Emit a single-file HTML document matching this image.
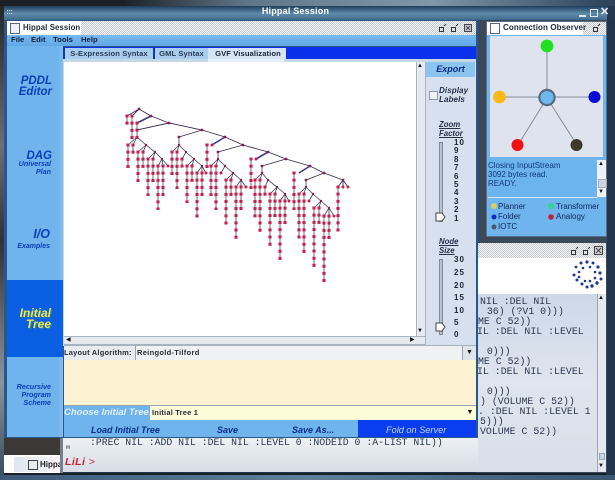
<!DOCTYPE html>
<html><head><meta charset="utf-8"><style>
html,body{margin:0;padding:0;background:#1a2c40}
#r{position:relative;width:615px;height:480px;overflow:hidden;font-family:"Liberation Sans",sans-serif;background:#22364c}
#r div{position:absolute;white-space:nowrap}
.n{font-weight:bold;font-style:italic;color:#0b3fb8;text-align:right}
.m{font-family:"Liberation Mono",monospace;font-size:9.9px;color:#2a3850;left:480px;line-height:11px}
.t{font-size:7.5px;font-weight:bold;color:#2a2c38;letter-spacing:.2px;line-height:10px}
.b{font-weight:bold;font-style:italic;font-size:9px;color:#0c2f88;line-height:12px}
.tab{top:48px;height:11px;background:#a9cdef;font-size:7.6px;font-weight:bold;color:#2b3a52;line-height:12px;text-align:center;border-left:2px solid #1438a8;letter-spacing:.1px}
.sl{font-size:8px;font-weight:bold;color:#1c2430;line-height:9px;left:454px;letter-spacing:1px}
.lg{font-size:8px;color:#0e2a60;line-height:10px}
.mn{top:34px;font-size:7.7px;font-weight:bold;color:#102040;line-height:12px}
.chk{background:repeating-conic-gradient(#c8ccd2 0 25%,#f4f5f7 0 50%) 0 0/2px 2px}
</style></head><body><div id="r">

<div style="left:0;top:0;width:615px;height:6px;background:linear-gradient(90deg,#1c2026 0,#1c2026 20%,#5f7688 40%,#7f98a8 70%,#2c4058 100%)"></div>
<div style="left:0;top:6px;width:5px;height:470px;background:linear-gradient(180deg,#22262c,#6a7078 30%,#2e3238 50%,#8a95a0 80%,#3a4c60)"></div>
<div style="left:4px;top:6px;width:603px;height:14px;background:linear-gradient(180deg,#1f3f5c,#5f8bab 55%,#3f6a8c)"></div>
<div style="left:0;top:5px;width:591px;height:13px;text-align:center;color:#fff;font-size:9px;font-weight:bold;line-height:13px;letter-spacing:.2px">Hippal Session</div>
<div style="left:7px;top:10px;width:5px;height:4px;border-top:1px dotted #dde;border-bottom:1px dotted #dde;box-sizing:border-box"></div>
<div style="left:579px;top:15px;width:7px;height:2px;background:#dfe8f0"></div>
<div style="left:590px;top:9px;width:6px;height:6px;border:1px solid #dfe8f0"></div>
<div style="left:600px;top:6px;color:#e8eef4;font-size:11px;font-weight:bold;line-height:13px">✕</div>

<div style="left:476px;top:20px;width:139px;height:460px;background:#39495a"></div>
<div style="left:607px;top:20px;width:8px;height:460px;background:#23354a"></div>

<!-- Lower-right window -->
<div class="chk" style="left:478px;top:243px;width:128px;height:15px"></div>
<div style="left:478px;top:258px;width:128px;height:36px;background:#fff"></div>
<div style="left:478px;top:294px;width:128px;height:178px;background:linear-gradient(180deg,#cdd8e8,#dfe5ee 50%,#d8dfe8)"></div>
<div style="left:597px;top:294px;width:9px;height:178px;background:#e4e9f0;border-left:1px solid #9aa6b4;box-sizing:border-box"></div>
<div style="left:598px;top:295px;font-size:6px;line-height:7px;color:#111">▲</div>
<div style="left:598px;top:463px;font-size:6px;line-height:7px;color:#111">▼</div>
<div style="left:599px;top:453px;width:6px;height:7px;background:#c4d2e6;border:1px solid #9aa6b4;box-sizing:border-box"></div>
<svg style="position:absolute;left:570px;top:258px" width="36" height="36" fill="#1e3a88">
<circle cx="17" cy="4" r="1.6"/><circle cx="23" cy="5" r="1.5"/><circle cx="11" cy="5" r="1.5"/><circle cx="28" cy="9" r="1.6"/><circle cx="6" cy="9" r="1.4"/><circle cx="30" cy="15" r="1.6"/><circle cx="4" cy="17" r="1.5"/><circle cx="31" cy="21" r="1.5"/><circle cx="7" cy="22" r="1.5"/><circle cx="27" cy="25" r="1.7"/><circle cx="12" cy="26" r="1.5"/><circle cx="22" cy="28" r="1.7"/><circle cx="17" cy="29" r="1.5"/><circle cx="13" cy="10" r="1.3"/><circle cx="20" cy="9" r="1.3"/><circle cx="25" cy="14" r="1.3"/><circle cx="9" cy="14" r="1.3"/><circle cx="9" cy="19" r="1.3"/><circle cx="25" cy="20" r="1.3"/><circle cx="15" cy="23" r="1.3"/><circle cx="20" cy="23" r="1.3"/>
</svg>
<svg style="position:absolute;left:568px;top:245px" width="38" height="11" fill="none" stroke="#333"><path d="M3.500 5.500h4v4h-4zM8 4l2-2M15.500 5.500h4v4h-4zM20 4l2-2"/><rect x="26.500" y="1.500" width="8" height="8" fill="#ccd" stroke="#444"/><path d="M28 3l5 5M33 3l-5 5" stroke="#444"/></svg>
<div class="m" style="top:296px">NIL :DEL NIL</div>
<div class="m" style="top:306px;left:475px">&nbsp;&nbsp;36) (?V1 0)))</div>
<div class="m" style="top:316px;left:478px">ME C 52))</div>
<div class="m" style="top:326px;left:477px">IL :DEL NIL :LEVEL</div>
<div class="m" style="top:346px;left:475px">&nbsp;&nbsp;0)))</div>
<div class="m" style="top:356px;left:478px">ME C 52))</div>
<div class="m" style="top:366px;left:477px">IL :DEL NIL :LEVEL</div>
<div class="m" style="top:386px;left:475px">&nbsp;&nbsp;0)))</div>
<div class="m" style="top:396px">) (VOLUME C 52))</div>
<div class="m" style="top:406px;left:478px">. :DEL NIL :LEVEL 1</div>
<div class="m" style="top:416px">5)))</div>
<div class="m" style="top:426px">VOLUME C 52))</div>

<!-- Bottom left under main frame -->
<div style="left:4px;top:437px;width:58px;height:18px;background:#3c3835"></div>
<div style="left:4px;top:455px;width:58px;height:19px;background:#fff"></div>
<div style="left:14px;top:457px;width:46px;height:15px;background:linear-gradient(90deg,#dfe6f0,#f4f6fa)"></div>
<div style="left:28px;top:460px;width:8px;height:8px;border:1px solid #444"></div>
<div style="left:40px;top:459px;font-size:8px;font-weight:bold;color:#222;line-height:11px">Hippa</div>
<div style="left:60px;top:437px;width:3px;height:36px;background:#777f88"></div>
<div style="left:63px;top:437px;width:415px;height:35px;background:linear-gradient(180deg,#eef1f5,#d8dde6)"></div>
<div style="left:4px;top:473px;width:603px;height:2px;background:#182028"></div>
<div style="left:0;top:475px;width:615px;height:5px;background:linear-gradient(90deg,#3c5a78,#5f7f9a 50%,#3a5670)"></div>
<div style="left:90px;top:437px;font-family:'Liberation Mono',monospace;font-size:9.8px;color:#2a3850;line-height:12px">:PREC NIL :ADD NIL :DEL NIL :LEVEL 0 :NODEID 0 :A-LIST NIL))</div>
<div style="left:65px;top:446px;font-family:'Liberation Mono',monospace;font-size:10px;color:#333;line-height:12px">"</div>
<div style="left:65px;top:456px;font-size:10.5px;font-style:italic;font-weight:bold;color:#d02030;line-height:13px;letter-spacing:.4px">LiLi <span style="font-weight:normal">&gt;</span></div>

<!-- Main frame -->
<div style="left:4px;top:20px;width:474px;height:418px;background:#2a5688"></div>
<div class="chk" style="left:7px;top:21px;width:469px;height:14px"></div>
<div style="left:7px;top:21px;width:74px;height:14px;background:#fff"></div>
<div style="left:10px;top:23px;width:8px;height:9px;border:1px solid #5a6a7a;background:#eef2f6"></div>
<div style="left:23px;top:22px;font-size:7.8px;font-weight:bold;color:#202a38;line-height:12px;letter-spacing:.1px">Hippal Session</div>
<svg style="position:absolute;left:436px;top:23px" width="38" height="11" fill="none" stroke="#333"><path d="M3.500 4.500h4v4h-4zM8 3l2-2M15.500 4.500h4v4h-4zM20 3l2-2"/><rect x="28.500" y="1.500" width="7" height="7" fill="#ccd" stroke="#444"/><path d="M30 3l4 4M34 3l-4 4" stroke="#444"/></svg>
<div style="left:7px;top:35px;width:469px;height:11px;background:linear-gradient(180deg,#78baf0,#62a8e6)"></div>
<div class="mn" style="left:11px">File</div>
<div class="mn" style="left:31px">Edit</div>
<div class="mn" style="left:53px">Tools</div>
<div class="mn" style="left:81px">Help</div>

<!-- sidebar -->
<div style="left:7px;top:46px;width:56px;height:391px;background:linear-gradient(90deg,#6fb4ec,#6fb4ec 90%,#86c0ee)"></div>
<div style="left:7px;top:280px;width:56px;height:77px;background:#0a5fe2"></div>
<div class="n" style="left:7px;width:45px;top:76px;font-size:11.5px;line-height:11px">PDDL<br>Editor</div>
<div class="n" style="left:7px;width:45px;top:150px;font-size:11.5px;line-height:13px">DAG</div>
<div class="n" style="left:7px;width:44px;top:160px;font-size:7.2px;line-height:8px">Universal<br>Plan</div>
<div class="n" style="left:7px;width:43px;top:228px;font-size:12.5px;line-height:13px">I/O</div>
<div class="n" style="left:7px;width:43px;top:242px;font-size:7px;line-height:9px">Examples</div>
<div class="n" style="left:7px;width:44px;top:308px;font-size:12px;line-height:11px;color:#e8ea50;text-shadow:1px 1px 1px #3a7a9a">Initial<br>Tree</div>
<div class="n" style="left:7px;width:44px;top:383px;font-size:7.2px;line-height:8px">Recursive<br>Program<br>Scheme</div>

<!-- tabs -->
<div style="left:63px;top:47px;width:413px;height:12px;background:#0b30ec"></div>
<div class="tab" style="left:63px;width:88px">S-Expression Syntax</div>
<div class="tab" style="left:153px;width:53px">GML Syntax</div>
<div class="tab" style="left:208px;width:76px;background:#d4e4f6;height:13px;color:#1c2434;border-left-color:#d4e4f6">GVF Visualization</div>
<div style="left:63px;top:59px;width:413px;height:3px;background:#c4d8e6"></div>
<div style="left:208px;top:59px;width:76px;height:3px;background:#e6f0fa"></div>
<div style="left:63px;top:59px;width:1px;height:287px;background:#c4d8e6"></div>

<!-- canvas -->
<div style="left:64px;top:62px;width:352px;height:274px;background:#fff"></div>
<svg style="position:absolute;left:0;top:0" width="615" height="480" fill="none">
<path stroke="#3a2a58" stroke-width=".9" d="M139 109L151 116L169 123L202 130L225 137L243 145L268 152L286 159L310 166L324 173L343 180M139 109L127 116M139 109L132 116M169 123L137 130M202 130L179 137M243 145L218 152M286 159L262 166M324 173L306 180M343 180L338 187M343 180L348 187M343 180V187"/>
<path stroke="#3a3a8c" stroke-width="1.6" d="M151 116L137 123M225 137L212 145M268 152L256 159M310 166L299 173"/>
<path stroke="#43405a" stroke-width=".8" d="M137 137L128 145M137 137L133 145M137 137L146 145L155 152L162 159L168 166M146 145L138 152M146 145L143 152M155 152L148 159M155 152L153 159M162 159L158 166M162 159L163 166M179 137V145L186 152L194 159L202 166L206 173M179 145L172 152M179 145L177 152M186 152L182 159M194 159L187 166M194 159L192 166M202 166L197 173M202 166V173M218 152V159L225 166L233 173L241 180L246 187M218 159L211 166M218 159L216 166M225 166L221 173M233 173L226 180M233 173L231 180M241 180L236 187M241 180V187M262 166V173L268 180L277 187L285 194L289 201M262 173L255 180M262 173L260 180M268 180L265 187M277 187L270 194M277 187L275 194M285 194L280 201M285 194V201M306 180V187L313 194L321 201L329 208L334 216M306 187L299 194M306 187L304 194M313 194L309 201M321 201L314 208M321 201L319 208M329 208L324 216M329 208V216"/>
<path stroke="#7d6a78" stroke-width="1" d="M127 115V124M132 115V138M137 122V138M128 144V167M133 144V153M138 151V181M143 151V167M148 158V195M153 158V181M158 165V209M163 165V195M172 151V174M177 151V188M182 158V167M187 165V202M192 165V181M197 172V217M202 172V195M207 144V167M211 165V195M216 165V209M221 172V174M226 179V224M231 179V195M236 186V238M241 186V209M251 158V188M255 179V217M260 179V231M265 186V195M270 193V245M275 193V217M280 200V260M285 200V224M294 172V209M299 193V238M304 193V253M309 200V202M314 207V267M319 207V224M324 215V281M329 215V238M338 186V231"/>
<path stroke="#c4204e" stroke-width="3.1" stroke-dasharray="3 4.17" d="M127 114.500V125M132 114.500V139M137 121.500V139M128 143.500V168M133 143.500V154M138 150.500V182M143 150.500V168M148 157.500V196M153 157.500V182M158 164.500V210M163 164.500V196M172 150.500V175M177 150.500V189M182 157.500V168M187 164.500V203M192 164.500V182M197 171.500V218M202 171.500V196M207 143.500V168M211 164.500V196M216 164.500V210M226 178.500V225M231 178.500V196M236 185.500V239M241 185.500V210M251 157.500V189M255 178.500V218M260 178.500V232M265 185.500V196M270 192.500V246M275 192.500V218M280 199.500V261M285 199.500V225M294 171.500V210M299 192.500V239M304 192.500V254M314 206.500V268M319 206.500V225M324 214.500V282M329 214.500V239M338 185.500V232"/>
<g fill="#c4204e">
<circle cx="168" cy="166" r="1.5"/><circle cx="206" cy="173" r="1.5"/><circle cx="221" cy="173" r="1.5"/><circle cx="246" cy="187" r="1.5"/><circle cx="289" cy="201" r="1.5"/><circle cx="309" cy="201" r="1.5"/><circle cx="334" cy="216" r="1.5"/><circle cx="343" cy="187" r="1.5"/><circle cx="348" cy="187" r="1.5"/><circle cx="256" cy="159" r="1.5"/><circle cx="212" cy="145" r="1.5"/>
</g>
<g fill="#8c1e48">
<circle cx="139" cy="109" r="1.4"/><circle cx="151" cy="116" r="1.4"/><circle cx="169" cy="123" r="1.4"/><circle cx="202" cy="130" r="1.4"/><circle cx="225" cy="137" r="1.4"/><circle cx="243" cy="145" r="1.4"/><circle cx="268" cy="152" r="1.4"/><circle cx="286" cy="159" r="1.4"/><circle cx="310" cy="166" r="1.4"/><circle cx="324" cy="173" r="1.4"/><circle cx="343" cy="180" r="1.4"/><circle cx="179" cy="137" r="1.4"/><circle cx="218" cy="152" r="1.4"/><circle cx="262" cy="166" r="1.4"/><circle cx="306" cy="180" r="1.4"/>
<circle cx="146" cy="145" r="1.2"/><circle cx="155" cy="152" r="1.2"/><circle cx="162" cy="159" r="1.2"/><circle cx="179" cy="145" r="1.2"/><circle cx="186" cy="152" r="1.2"/><circle cx="194" cy="159" r="1.2"/><circle cx="202" cy="166" r="1.2"/><circle cx="218" cy="159" r="1.2"/><circle cx="225" cy="166" r="1.2"/><circle cx="233" cy="173" r="1.2"/><circle cx="241" cy="180" r="1.2"/><circle cx="262" cy="173" r="1.2"/><circle cx="268" cy="180" r="1.2"/><circle cx="277" cy="187" r="1.2"/><circle cx="285" cy="194" r="1.2"/><circle cx="306" cy="187" r="1.2"/><circle cx="313" cy="194" r="1.2"/><circle cx="321" cy="201" r="1.2"/><circle cx="329" cy="208" r="1.2"/>
</g>
</svg>

<!-- scrollbars -->
<div style="left:416px;top:62px;width:9px;height:283px;background:#e6eaf0;border-left:1px solid #aab4c0;box-sizing:border-box"></div>
<div style="left:417px;top:62px;font-size:6px;line-height:8px;color:#111">▲</div>
<div style="left:417px;top:327px;font-size:6px;line-height:8px;color:#111">▼</div>
<div style="left:64px;top:336px;width:361px;height:9px;background:#e6eaf0;border-top:1px solid #aab4c0;border-bottom:1px solid #aab4c0;box-sizing:border-box"></div>
<div style="left:66px;top:336px;font-size:6px;line-height:9px;color:#111">◀</div>
<div style="left:410px;top:336px;font-size:6px;line-height:9px;color:#111">▶</div>

<!-- right controls -->
<div style="left:425px;top:62px;width:51px;height:283px;background:#d6e0ee;border-left:1px solid #a8b4c4;box-sizing:border-box"></div>
<div style="left:426px;top:62px;width:49px;height:15px;background:#8cc4f0;text-align:center;font-size:9px;font-weight:bold;font-style:italic;color:#0c2a80;line-height:15px">Export</div>
<div style="left:429px;top:91px;width:7px;height:7px;background:#eef2f6;border:1px solid #8e9cac"></div>
<div style="left:439px;top:86px;font-size:8px;font-weight:bold;font-style:italic;color:#25304a;line-height:9px;letter-spacing:.1px">Display<br>Labels</div>
<div style="left:439px;top:120px;font-size:7.800px;font-weight:bold;font-style:italic;color:#25304a;line-height:9px;text-decoration:underline">Zoom<br>Factor</div>
<div style="left:439px;top:142px;width:2px;height:78px;background:#b8c2ce;border:1px solid #808a98"></div>
<svg style="position:absolute;left:435px;top:212px" width="12" height="11"><path d="M1 1H7L10 5L7 9H1Z" fill="#fff" stroke="#444"/></svg>
<div class="sl" style="top:138px">10</div><div class="sl" style="top:146px">9</div><div class="sl" style="top:155px">8</div><div class="sl" style="top:163px">7</div><div class="sl" style="top:172px">6</div><div class="sl" style="top:180px">5</div><div class="sl" style="top:188px">4</div><div class="sl" style="top:197px">3</div><div class="sl" style="top:205px">2</div><div class="sl" style="top:214px">1</div>
<div style="left:439px;top:237px;font-size:7.800px;font-weight:bold;font-style:italic;color:#25304a;line-height:9px;text-decoration:underline">Node<br>Size</div>
<div style="left:439px;top:259px;width:2px;height:74px;background:#b8c2ce;border:1px solid #808a98"></div>
<svg style="position:absolute;left:435px;top:322px" width="12" height="11"><path d="M1 1H7L10 5L7 9H1Z" fill="#fff" stroke="#444"/></svg>
<div class="sl" style="top:255px">30</div><div class="sl" style="top:268px">25</div><div class="sl" style="top:281px">20</div><div class="sl" style="top:293px">15</div><div class="sl" style="top:306px">10</div><div class="sl" style="top:318px">5</div><div class="sl" style="top:330px">0</div>

<!-- layout row -->
<div style="left:64px;top:345px;width:412px;height:15px;background:#e8ebef;border-top:1px solid #a8b0b8;box-sizing:border-box"></div>
<div class="t" style="left:64px;top:348px">Layout Algorithm:</div>
<div style="left:135px;top:346px;width:341px;height:14px;background:#f0f1f2;border-left:1px solid #9aa2ac;box-sizing:border-box"></div>
<div class="t" style="left:137px;top:348px;letter-spacing:.3px">Reingold-Tilford</div>
<div style="left:462px;top:346px;width:14px;height:14px;background:#dfe4ea;border-left:1px solid #9aa2ac;box-sizing:border-box;font-size:7px;text-align:center;line-height:14px;color:#111">▼</div>
<div style="left:64px;top:360px;width:412px;height:45px;background:#fdf2d2"></div>
<div style="left:64px;top:405px;width:412px;height:1px;background:#9aa6b0"></div>
<div style="left:64px;top:406px;width:86px;height:14px;background:#6fb4ec"></div>
<div style="left:64px;top:407px;font-size:9.500px;font-weight:bold;font-style:italic;color:#e0f0ff;line-height:12px">Choose Initial Tree:</div>
<div style="left:150px;top:406px;width:326px;height:14px;background:#fdfbd8"></div>
<div class="t" style="left:152px;top:408px">Initial Tree 1</div>
<div style="left:464px;top:406px;font-size:7px;width:12px;text-align:center;line-height:14px;color:#111">▼</div>
<div style="left:64px;top:420px;width:294px;height:17px;background:#6fb4ec"></div>
<div style="left:358px;top:420px;width:118px;height:17px;background:#0a3cf0"></div>
<div class="b" style="left:91px;top:424px">Load Initial Tree</div>
<div class="b" style="left:217px;top:424px">Save</div>
<div class="b" style="left:292px;top:424px">Save As...</div>
<div class="b" style="left:386px;top:424px;color:#c0d6f8;font-weight:normal;font-size:9.200px">Fold on Server</div>

<!-- Connection Observer -->
<div style="left:486px;top:21px;width:121px;height:216px;background:#6fb4ec;border:1px solid #5a7088;box-sizing:border-box"></div>
<div class="chk" style="left:487px;top:22px;width:119px;height:13px"></div>
<div style="left:487px;top:22px;width:96px;height:13px;background:#fff"></div>
<div style="left:490px;top:23px;width:8px;height:9px;border:1px solid #5a6a7a"></div>
<div style="left:503px;top:22px;font-size:8px;font-weight:bold;color:#202a38;line-height:12px;letter-spacing:.1px">Connection Observer</div>
<svg style="position:absolute;left:592px;top:23px" width="12" height="10" fill="none" stroke="#333"><path d="M1.500 4.500h4v4h-4zM6 3l2-2"/></svg>
<div style="left:490px;top:36px;width:113px;height:121px;background:#dfe3ee"></div>
<svg style="position:absolute;left:490px;top:36px" width="113" height="121">
<g stroke="#868e9a" stroke-width="1"><path d="M57 10V62M9 61H105M57 62L28 109M57 62L87 109"/></g>
<circle cx="57" cy="10" r="6.400" fill="#20e020"/><circle cx="9.500" cy="61" r="6.400" fill="#fdb818"/><circle cx="57" cy="61.500" r="7.600" fill="#6cb8f0" stroke="#5a6a7c" stroke-width="2.200"/><circle cx="104.500" cy="61" r="6" fill="#0808d8"/><circle cx="27.500" cy="109" r="6" fill="#f01010"/><circle cx="86.500" cy="109" r="6" fill="#3c3a28"/>
</svg>
<div style="left:488px;top:160px;width:109px;height:37px;background:#6cb4ee;border-bottom:1px solid #d8e8f4;font-size:8px;color:#133a78;line-height:9px"><span style="display:block;margin-top:1px">Closing InputStream<br>3092 bytes read.<br>READY.</span></div>
<div style="left:597px;top:160px;width:9px;height:37px;background:#eef1f5"></div>
<div style="left:598px;top:160px;font-size:6px;line-height:8px;color:#111">▲</div>
<div style="left:598px;top:188px;font-size:6px;line-height:8px;color:#111">▼</div>
<div style="left:598px;top:179px;width:7px;height:7px;background:#ccd6e2;border:1px solid #aab"></div>
<svg style="position:absolute;left:487px;top:198px" width="119" height="38">
<circle cx="7" cy="8" r="3" fill="#d8d060"/><circle cx="7" cy="19" r="2.500" fill="#0c2cc8"/><circle cx="7" cy="29" r="2.500" fill="#44586a"/><circle cx="64" cy="8" r="3" fill="#30d890"/><circle cx="64" cy="19" r="2.800" fill="#c02040"/>
</svg>
<div class="lg" style="left:498px;top:202px">Planner</div>
<div class="lg" style="left:498px;top:212px">Folder</div>
<div class="lg" style="left:498px;top:222px">IOTC</div>
<div class="lg" style="left:556px;top:202px">Transformer</div>
<div class="lg" style="left:556px;top:212px">Analogy</div>

</div></body></html>
